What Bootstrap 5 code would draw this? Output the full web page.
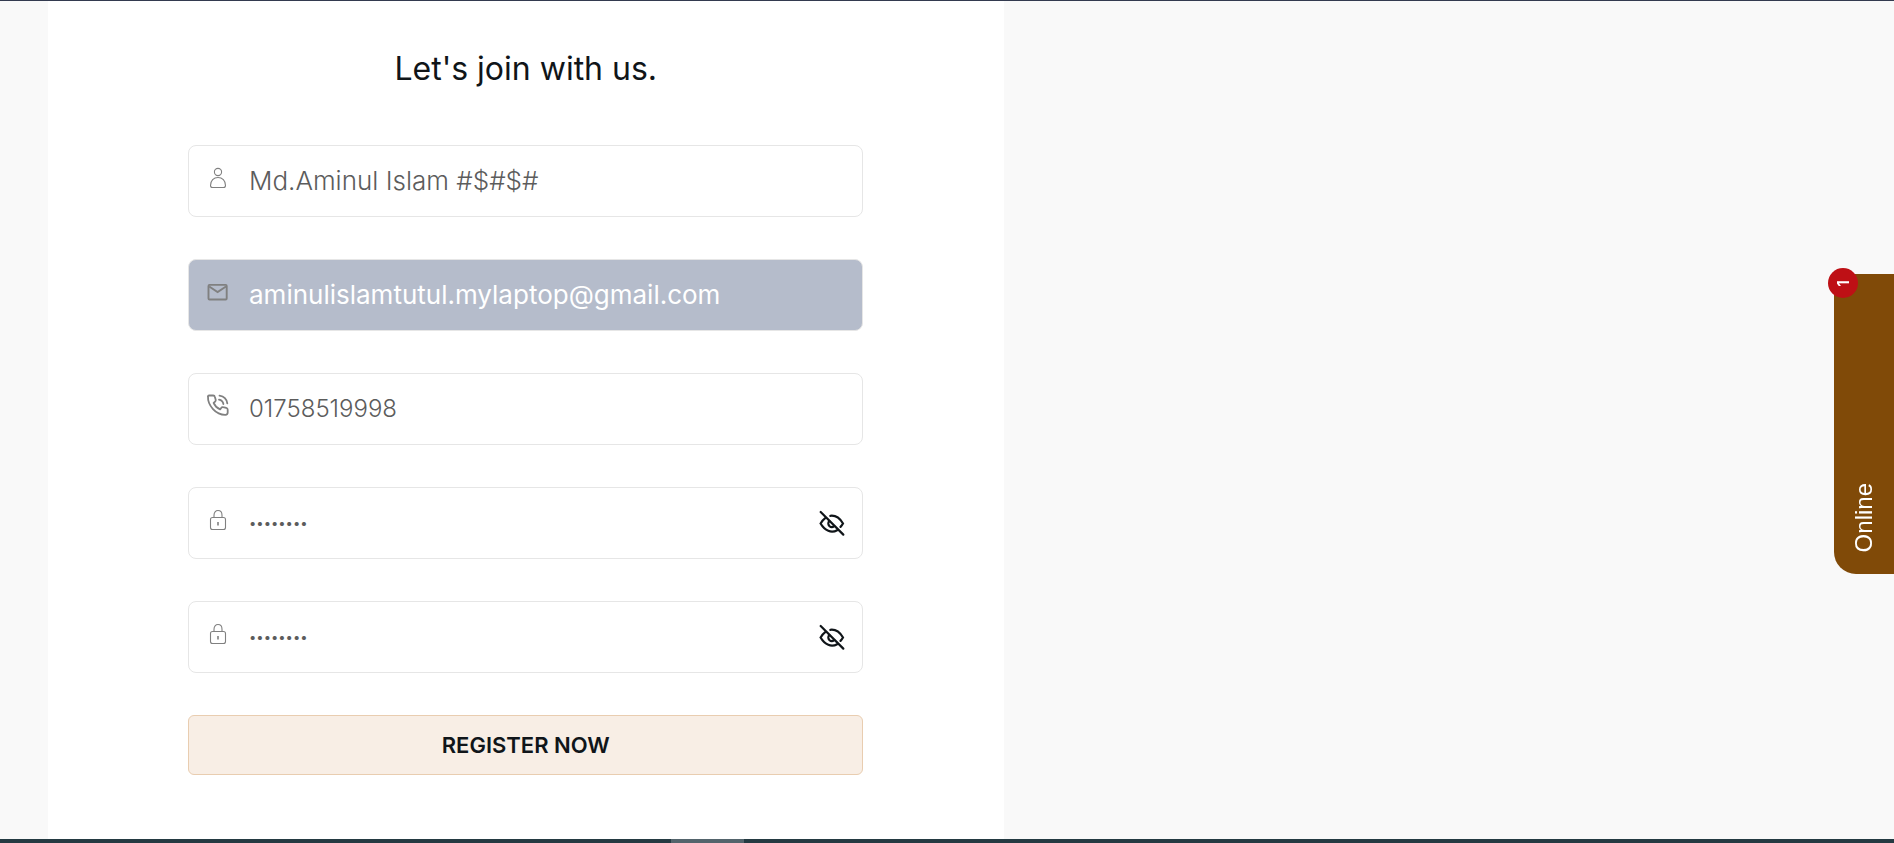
<!DOCTYPE html>
<html lang="en">
<head>
<meta charset="utf-8">
<meta name="viewport" content="width=device-width, initial-scale=1">
<title>Register</title>
<link href="https://cdn.jsdelivr.net/npm/bootstrap@5.3.0/dist/css/bootstrap.min.css" rel="stylesheet">
<style>
  body { background: #f9f9f9; color: #101519; font-family: Inter, "Open Sans", sans-serif; }
  .top-strip { height: 1px; background: #333a4f; }
  .bottom-strip { height: 4px; background: #243a42; }
  .scroll-thumb { width: 73px; margin-left: 671px; background: #53646c; }
  .join-panel { width: 50.5%; margin-left: 48px; padding: 48px 141px 60px 140px; }
  .join-title { font-size: 32px; line-height: 40px; font-weight: 400; margin-bottom: 56px; }
  .field-stack { gap: 42px; }
  .field-box { height: 72px; border: 1px solid #e6e6e6; border-radius: 8px; padding: 0 17px 0 16px; }
  .field-icon { color: #808080; margin-bottom: 6px; }
  .field-box .form-control { font-size: 26px; line-height: 36px; font-weight: 300; color: #5c5c5c; padding: 0 16px 0 18px; box-shadow: none; }
  .field-box .form-control[type="tel"] { font-size: 24px; }
  .field-box .form-control[type="password"] { font-size: 13px; font-weight: 400; }
  .field-box.locked { background: #b5bccb; }
  .field-box.locked .form-control { color: #fff; font-weight: 400; }
  .btn-register { height: 60px; border: 1px solid #e9cdb0; border-radius: 6px; background: #f8eee5; color: #101519; font-size: 22px; font-weight: 600; }
  .btn-register:hover { background: #f3e2d2; border-color: #e0bb94; }
  .eye-toggle { color: #101519; }
  .chat-tab { top: 274px; right: 0; width: 60px; height: 300px; border: 0; border-radius: 0 0 0 22px; background: #804a08; color: #fff; font: 24px/28px "Liberation Sans", sans-serif; padding: 0; }
  .chat-label { writing-mode: vertical-rl; transform: rotate(180deg); padding-top: 22px; }
  .chat-count { top: -6px; left: -6px; width: 30px; height: 30px; background: #be1015; font-family: Inter, sans-serif; font-size: 16px; font-weight: 600; }
  .chat-count span { writing-mode: vertical-rl; transform: rotate(180deg); line-height: 16px; }
</style>
</head>
<body class="d-flex flex-column min-vh-100">
<svg class="d-none" aria-hidden="true">
  <symbol id="i-user" viewBox="0 0 26 24"><g fill="none" stroke="currentColor" stroke-width="1.1"><circle cx="13" cy="6" r="3.6"/><path d="M7.500 21.500h11c1.200 0 2-.8 2-2 0-4.800-3.200-8-7.500-8s-7.500 3.200-7.500 8c0 1.200.8 2 2 2z"/></g></symbol>
  <symbol id="i-mail" viewBox="0 0 26 24"><g fill="none" stroke="currentColor" stroke-width="1.900"><rect x="3.500" y="4.900" width="18.200" height="14.600" rx="1"/><path d="M4.200 6.500l8.400 5.500 8.400-5.500"/></g></symbol>
  <symbol id="i-phone" viewBox="0 1 26 24"><g fill="none" stroke="currentColor" stroke-width="1.800" stroke-linecap="round" stroke-linejoin="round"><path d="M3 3.400c-.5 9 8 18.600 17.500 18.400 1.500 0 2.200-.8 2.200-2.200v-2.800c0-1-.6-1.700-1.500-1.900l-3.100-.7c-.8-.2-1.400 0-1.900.7l-1.100 1.500c-3-1.300-5.300-3.600-6.500-6.500l1.400-1.200c.7-.5.9-1.100.7-1.900L9.900 3.900c-.2-.9-.8-1.400-1.700-1.400H4c-.6 0-1 .3-1 .9z"/><path d="M14.500 2.600c4.300.6 7.200 3.500 7.800 7.800M14 6.600c2.500.4 4 1.900 4.400 4.400"/></g></symbol>
  <symbol id="i-lock" viewBox="0 0 26 24"><g fill="none" stroke="currentColor" stroke-width="1.100"><rect x="5.500" y="9.500" width="15" height="12" rx="2"/><path d="M9 9.500V7.200C9 4.400 10.600 2.500 13 2.500s4 1.900 4 4.700v2.300"/></g><path d="M13 14v3.500" stroke="currentColor" stroke-width="1.600"/></symbol>
  <symbol id="i-eye" viewBox="0 -1 26 26"><g fill="none" stroke="currentColor" stroke-width="2.200" stroke-linecap="round"><path d="M1.700 1l22.600 22.600"/><path d="M11.300 4.800c5.600-.7 9.700 2.600 12.700 7.700-.8 1.400-1.600 2.500-2.500 3.400M6.200 7.100C4.300 8.500 2.900 10.300 1.600 12.500c4.300 7.400 10.700 9.900 16.600 6.700"/><path d="M10.300 10.100c-1.300 1.400-1.300 3.600 0 4.900 1.400 1.300 3.500 1.300 4.800.1"/></g></symbol>
</svg>

<div class="top-strip"></div>
<main class="flex-grow-1 d-flex">
  <form class="join-panel bg-white">
    <h1 class="join-title text-center">Let's join with us.</h1>
    <div class="field-stack d-grid">
      <div class="field-box d-flex align-items-center">
        <label class="field-icon d-flex" for="name"><svg width="26" height="24" role="img" aria-label="Name"><use href="#i-user"/></svg></label>
        <input class="form-control border-0 bg-transparent" id="name" type="text" value="Md.Aminul Islam #$#$#">
      </div>
      <div class="field-box locked d-flex align-items-center">
        <label class="field-icon d-flex" for="email"><svg width="26" height="24" role="img" aria-label="Email"><use href="#i-mail"/></svg></label>
        <input class="form-control border-0 bg-transparent" id="email" type="email" value="aminulislamtutul.mylaptop@gmail.com" readonly>
      </div>
      <div class="field-box d-flex align-items-center">
        <label class="field-icon d-flex" for="phone"><svg width="26" height="24" role="img" aria-label="Phone"><use href="#i-phone"/></svg></label>
        <input class="form-control border-0 bg-transparent" id="phone" type="tel" value="01758519998">
      </div>
      <div class="field-box d-flex align-items-center">
        <label class="field-icon d-flex" for="pass"><svg width="26" height="24" role="img" aria-label="Password"><use href="#i-lock"/></svg></label>
        <input class="form-control border-0 bg-transparent" id="pass" type="password" value="password">
        <button class="eye-toggle btn border-0 p-0 d-flex" type="button" aria-label="Show password"><svg width="26" height="26"><use href="#i-eye"/></svg></button>
      </div>
      <div class="field-box d-flex align-items-center">
        <label class="field-icon d-flex" for="pass2"><svg width="26" height="24" role="img" aria-label="Confirm password"><use href="#i-lock"/></svg></label>
        <input class="form-control border-0 bg-transparent" id="pass2" type="password" value="password">
        <button class="eye-toggle btn border-0 p-0 d-flex" type="button" aria-label="Show password"><svg width="26" height="26"><use href="#i-eye"/></svg></button>
      </div>
      <button class="btn btn-register" type="submit">REGISTER NOW</button>
    </div>
  </form>
</main>
<div class="bottom-strip d-flex"><div class="scroll-thumb"></div></div>

<button class="chat-tab position-fixed d-flex flex-column justify-content-end align-items-center" type="button">
  <span class="chat-label">Online</span>
  <span class="chat-count position-absolute rounded-circle d-flex align-items-center justify-content-center"><span>1</span></span>
</button>
<script src="https://cdn.jsdelivr.net/npm/bootstrap@5.3.0/dist/js/bootstrap.bundle.min.js"></script>
</body>
</html>
